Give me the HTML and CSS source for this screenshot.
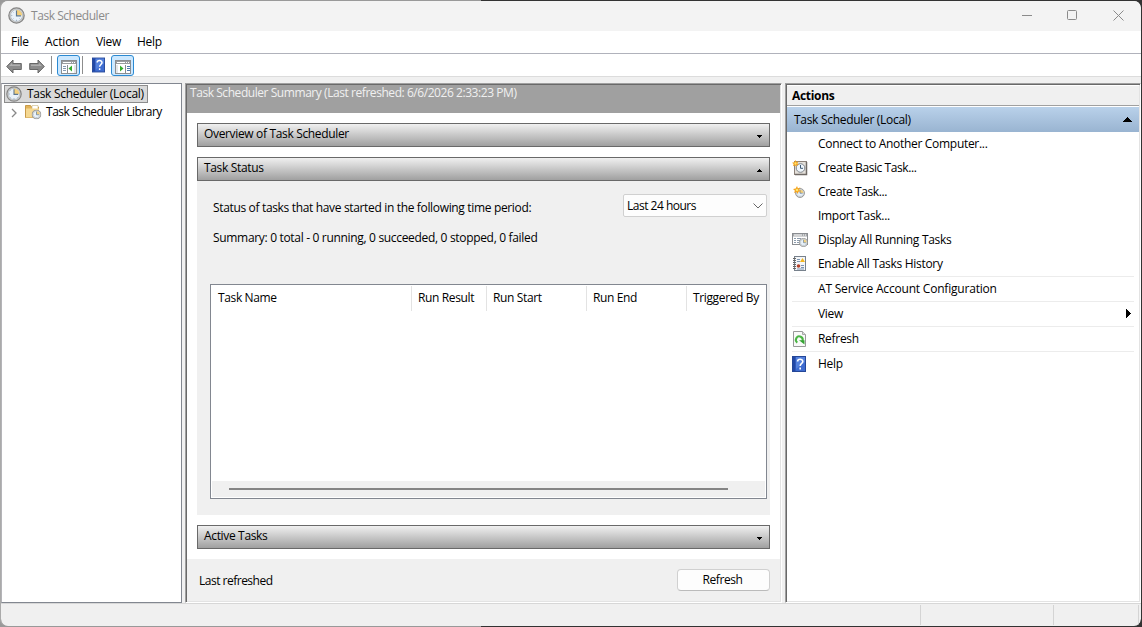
FILE: index.html
```html
<!DOCTYPE html>
<html lang="en">
<head>
<meta charset="utf-8">
<title>Task Scheduler</title>
<link rel="stylesheet" href="styles.css">
</head>
<body>
<svg class="defs" width="0" height="0">
  <symbol id="clock" viewBox="0 0 16 16">
    <circle cx="8" cy="8" r="7.2" fill="#d0d0ce" stroke="#858585" stroke-width="1.200"/>
    <circle cx="8" cy="8" r="5.6" fill="#e9f2fa" stroke="#a8b0b8" stroke-width=".6"/>
    <path d="M8 8V2.6A5.4 5.4 0 0 1 13.4 8Z" fill="#f3cf7b"/>
    <path d="M8 3.2V8.4H12.2" fill="none" stroke="#5d7891" stroke-width="1.1"/>
    <path d="M3 8h1M8 12v1.2M4.5 4.5l.6.6M4.5 11.5l.6-.6M11.5 11.5l-.6-.6" stroke="#8c9eb0" stroke-width=".7"/>
  </symbol>
  <symbol id="help" viewBox="0 0 14 16">
    <rect x=".5" y=".5" width="13" height="15" fill="#3e6cd0" stroke="#244798"/>
    <path d="M1 1h2.5v14H1z" fill="#2348a5"/>
    <path d="M4 1h9v5L4 13z" fill="#6490e5" opacity=".6"/>
    <path d="M5.6 5.4C5.6 2.6 10.8 2.5 10.8 5.4C10.8 7.5 8.2 7.4 8.2 10M8.2 11.6v1.8" fill="none" stroke="#fff" stroke-width="1.6"/>
  </symbol>
  <symbol id="star" viewBox="0 0 8 8">
    <path d="M4 0l1 2.4L7.4 1.300 6 4l2 1.300-2.600.4L5 8 3.400 6 1 7l.9-2.300L0 3l2.700-.5z" fill="#f5a21b"/>
    <circle cx="4" cy="4" r="1.300" fill="#ffe36b"/>
  </symbol>
</svg>
<div class="window">
  <header class="titlebar">
    <svg class="app-icon" width="17" height="17"><use href="#clock"/></svg>
    <span class="title">Task Scheduler</span>
    <svg class="win-buttons" width="104" height="12" fill="none" stroke="#8b8b8b">
      <path d="M0 6.500h10"/><rect x="45.500" y="1.500" width="9" height="9" rx="1"/><path d="M91.500 1.500l10 10M101.500 1.500l-10 10"/>
    </svg>
  </header>
  <nav class="menubar"><span class="m-file">File</span><span class="m-action">Action</span><span class="m-view">View</span><span>Help</span></nav>
  <div class="toolbar">
    <svg class="arrow" width="16" height="15"><path d="M.7 7.500L7 1v3.500h8.300v6H7V14z" fill="#8c8c8c" stroke="#686868"/><path d="M3 7l3-3v1.500h8v1.500z" fill="#b0b0b0"/></svg>
    <svg class="arrow second" width="16" height="15"><path d="M15.300 7.500L9 1v3.500H.7v6H9V14z" fill="#8c8c8c" stroke="#686868"/><path d="M13 7l-3-3v1.500H2v1.500z" fill="#b0b0b0"/></svg>
    <i class="tool-sep"></i>
    <span class="tool-button"><svg width="16" height="14"><rect x=".5" y=".5" width="15" height="13" fill="#fff" stroke="#8a8d91"/><path d="M1 1h14v3H1z" fill="#9a9da0"/><path d="M2 2.500h8M11 2.500h1M13 2.500h1" stroke="#fff"/><path d="M6.500 5v8" stroke="#8a8d91"/><path d="M2 6.500h3M2 8.500h3M2 10.500h3" stroke="#8499b2"/><path d="M13 5h2v8h-2z" fill="#e4e6e8"/><path d="M11 5.500v6L7.500 8.500z" fill="#35ad2c"/></svg></span>
    <i class="tool-sep near"></i>
    <svg class="tool-help" width="13" height="16"><use href="#help"/></svg>
    <span class="tool-button"><svg width="16" height="14"><rect x=".5" y=".5" width="15" height="13" fill="#fff" stroke="#8a8d91"/><path d="M1 1h14v3H1z" fill="#9a9da0"/><path d="M2 2.500h8M11 2.500h1M13 2.500h1" stroke="#fff"/><path d="M10.500 5v8" stroke="#8a8d91"/><path d="M12 6.500h3M12 8.500h3M12 10.500h3" stroke="#4b78ad"/><path d="M1 5h2v8H1z" fill="#e4e6e8"/><path d="M5 5.500v6l3.500-3z" fill="#35ad2c"/></svg></span>
  </div>
  <main class="workspace">
    <aside class="tree">
      <div class="tree-root"><svg width="16" height="16"><use href="#clock"/></svg><span>Task Scheduler (Local)</span></div>
      <div class="tree-child">
        <svg class="chevron" width="6" height="10" fill="none" stroke="#888" stroke-width="1.300"><path d="M1 1l4 4-4 4"/></svg>
        <svg width="17" height="16"><path d="M.5 1.500h5l1 1.500h7v10.500H.5z" fill="#e2b45b" stroke="#c89a49"/><path d="M7 1.500h6v4H7z" fill="#fff" stroke="#c9b57d" stroke-width=".6"/><path d="M1 4.500h13v9H1z" fill="#f5d892"/><svg x="6.500" y="5.500" width="10" height="10"><use href="#clock"/></svg></svg>
        <span>Task Scheduler Library</span>
      </div>
    </aside>
    <section class="summary">
      <h1 class="summary-head">Task Scheduler Summary (Last refreshed: 6/6/2026 2:33:23 PM)</h1>
      <div class="sections">
        <div class="bar"><span>Overview of Task Scheduler</span><svg width="5" height="3"><path d="M0 0h5v1H4v1H3v1H2V2H1V1H0z"/></svg></div>
        <div class="bar gap"><span>Task Status</span><svg width="5" height="3"><path d="M0 3h5V2H4V1H3V0H2v1H1v1H0z"/></svg></div>
        <div class="status">
          <div class="period"><span class="period-label">Status of tasks that have started in the following time period:</span>
            <div class="select"><span>Last 24 hours</span><svg width="10" height="6" fill="none" stroke="#666"><path d="M.5.5L5 5 9.500.5"/></svg></div></div>
          <p class="totals">Summary: 0 total - 0 running, 0 succeeded, 0 stopped, 0 failed</p>
          <div class="table">
            <div class="thead"><span>Task Name</span><span>Run Result</span><span>Run Start</span><span>Run End</span><span>Triggered By</span></div>
            <div class="scroll"><i class="thumb"></i></div>
          </div>
        </div>
        <div class="bar gap"><span>Active Tasks</span><svg width="5" height="3"><path d="M0 0h5v1H4v1H3v1H2V2H1V1H0z"/></svg></div>
      </div>
      <footer class="summary-foot"><span>Last refreshed</span><button class="refresh">Refresh</button></footer>
    </section>
    <aside class="actions">
      <h2 class="actions-head">Actions</h2>
      <div class="actions-group"><span>Task Scheduler (Local)</span><svg width="9" height="5"><path d="M0 5h9V4H8V3H7V2H6V1H5V0H4v1H3v1H2v1H1v1H0z"/></svg></div>
      <ul class="action-list">
        <li><span>Connect to Another Computer...</span></li>
        <li><svg width="16" height="16"><rect x="2.500" y="1.500" width="12" height="13" fill="#e4e0da" stroke="#8c8179"/><path d="M3 14.500h11.500V2" fill="none" stroke="#6f6965" stroke-width="1.500"/><circle cx="8.500" cy="8" r="4.300" fill="#eef5fb" stroke="#80858c"/><path d="M8.500 5v3.300H11" fill="none" stroke="#3f5975"/><use href="#star" width="7" height="7"/></svg><span class="tight">Create Basic Task...</span></li>
        <li><svg width="16" height="16"><svg x="3" y="4" width="10" height="10"><use href="#clock"/></svg><use href="#star" x="1" y="2" width="8" height="8"/></svg><span class="tight">Create Task...</span></li>
        <li><span>Import Task...</span></li>
        <li><svg width="16" height="16"><rect x=".5" y="1.500" width="15" height="11" fill="#fff" stroke="#8a8d91"/><path d="M1 2h14v2.500H1z" fill="#a5a8ab"/><path d="M2 3h8M11 3h1M13 3h1" stroke="#fff"/><path d="M2 6.500h2M5 6.500h4M2 8.500h2M5 8.500h3M2 10.500h2M5 10.500h2" stroke="#8c9cad"/><svg x="7" y="6" width="9" height="9"><use href="#clock"/></svg></svg><span>Display All Running Tasks</span></li>
        <li><svg width="16" height="16"><rect x="2.500" y=".5" width="11" height="14" fill="#f4f6f8" stroke="#77818c"/><path d="M1 2.500h3M1 4.500h3M1 6.500h3M1 8.500h3M1 10.500h3M1 12.500h3" stroke="#666"/><path d="M5 3.500h3M5 5.500h3M9 9.500h3M9 11.500h3M5 13h7" stroke="#7d94b2"/><path d="M10.500 2L13 6H8z" fill="#f2b51e"/><circle cx="6.500" cy="10" r="1.800" fill="#b5432c"/></svg><span>Enable All Tasks History</span></li>
        <li class="split"><span class="loose">AT Service Account Configuration</span></li>
        <li class="split"><span>View</span><svg class="submenu" width="5" height="9"><path d="M0 0h1v1h1v1h1v1h1v1h1v1H4v1H3v1H2v1H1v1H0z"/></svg></li>
        <li class="split"><svg width="16" height="16"><path d="M1.500.5h9l3 3v12h-12z" fill="#fafafa" stroke="#999"/><path d="M10.500.5v3h3" fill="#ddd" stroke="#aaa"/><path d="M5.300 11.600A3.400 3.400 0 1 1 10.500 10" fill="none" stroke="#4ab543" stroke-width="2"/><path d="M7 9.300h5.500v4.200z" fill="#35a332"/></svg><span>Refresh</span></li>
        <li class="split"><svg width="16" height="16"><use href="#help" x="0" width="14" height="16"/></svg><span>Help</span></li>
      </ul>
    </aside>
  </main>
  <footer class="statusbar"><i class="cell one"></i><i class="cell two"></i><i class="cell three"></i></footer>
</div>
</body>
</html>
```
FILE: styles.css
```css
* { box-sizing: border-box; }
body { margin: 0; background: linear-gradient(90deg, #999 481px, #333 481px); overflow: hidden; font: 12px/16px "Open Sans", "Noto Sans", sans-serif; letter-spacing: -.3px; color: #000; }
svg { display: block; flex: none; }
span { white-space: nowrap; }
.defs { position: absolute; }
.window { width: 1142px; height: 627px; display: flex; flex-direction: column; border: 1px solid; border-color: transparent #333 transparent #aaa; border-radius: 8px; background: #f0f0f0; background-clip: padding-box; overflow: hidden; }
.titlebar { height: 30px; flex: none; display: flex; align-items: center; background: #f3f3f3; color: #8b8b8b; padding: 0 15px 2px 7px; }
.title { margin-left: 6px; letter-spacing: -.45px; padding-top: 2px; }
.win-buttons { margin-left: auto; }
.menubar { height: 23px; flex: none; display: flex; background: #fff; border-bottom: 1px solid #b0b2bb; padding: 3px 0 0 10px; }
.m-file { width: 34px; }
.m-action { width: 51px; letter-spacing: -.1px; }
.m-view { width: 41px; }
.toolbar { height: 23px; flex: none; display: flex; align-items: center; background: #fff; border-bottom: 1px solid #dcdcdc; padding-left: 5px; }
.arrow { margin-top: 2px; }
.second { margin-left: 7px; }
.tool-sep { width: 1px; height: 18px; background: #8d8d8d; margin: 0 5px 0 6px; }
.tool-sep.near { margin: 0 9px 0 2px; }
.tool-help { margin-right: 6px; }
.tool-button { width: 23px; height: 21px; display: flex; align-items: center; justify-content: center; padding-top: 4px; border: 1px solid #2c8ad2; border-radius: 3px; background: #cce8ff; }
.workspace { height: 526px; flex: none; display: flex; padding-top: 6px; }
.tree { width: 181px; height: 520px; margin-right: 3px; background: #fff; border: 1px solid #828790; border-left-color: #b4b4b8; padding: 1px 0 0 2px; }
.tree-root { display: flex; align-items: center; width: 144px; height: 18px; background: #d9d9d9; border: 1px solid #8c8c8c; padding-left: 1px; gap: 5px; }
.tree-child { display: flex; align-items: center; height: 18px; padding-left: 7px; }
.tree-child .chevron { margin: 2px 8px 0 0; }
.tree-child span { margin-left: 4px; letter-spacing: -.48px; }
.summary, .actions { height: 520px; border-style: solid; border-width: 1px; border-color: #a0a0a0 #fff #fff #a0a0a0; box-shadow: inset 1px 1px #696969, inset -1px -1px #e3e3e3; }
.summary { width: 597px; padding: 1px; display: flex; flex-direction: column; }
.summary-head { margin: 0; height: 28px; flex: none; background: #a0a0a0; color: #f0f0f0; font-size: 12px; font-weight: 400; letter-spacing: -.44px; padding-left: 3px; }
.sections { height: 446px; flex: none; background: #fff; padding: 10px 10px 0; }
.bar { height: 24px; display: flex; justify-content: space-between; align-items: center; border: 1px solid #696969; background: linear-gradient(#f0f0f0, #a0a0a0); padding: 0 7px 2px 6px; letter-spacing: -.34px; }
.bar svg { margin-top: 4px; }
.bar.gap { margin-top: 10px; }
.status { height: 334px; background: #f0f0f0; padding: 13px 3px 0 13px; }
.period { display: flex; justify-content: space-between; align-items: center; height: 23px; padding-left: 3px; }
.period-label { padding-top: 4px; letter-spacing: -.34px; }
.select { display: flex; align-items: center; justify-content: space-between; width: 144px; height: 23px; background: #fdfdfd; border: 1px solid #d0d0d0; border-radius: 2px; padding: 1px 3px 0 3px; letter-spacing: -.5px; }
.totals { margin: 13px 0 38px 3px; letter-spacing: -.32px; }
.table { height: 215px; display: flex; flex-direction: column; justify-content: space-between; background: #fff; border: 1px solid #828790; padding: 1px; }
.thead { display: grid; grid-template-columns: 200px 75px 100px 100px 1fr; height: 25px; letter-spacing: -.36px; }
.thead span { padding: 4px 0 0 6px; border-right: 1px solid #e3e3e3; }
.thead span:last-child { border: 0; }
.scroll { height: 16px; background: #f0f0f0; padding: 7px 0 0 17px; }
.thumb { display: block; width: 499px; height: 2px; background: #858585; }
.summary-foot { flex: 1; padding: 10px 10px 0 12px; display: flex; justify-content: space-between; }
.summary-foot span { margin-top: 4px; letter-spacing: -.5px; }
.refresh { width: 93px; height: 22px; padding: 0 2px 0 0; font: inherit; letter-spacing: -.4px; background: #fdfdfd; border: 1px solid #d0d0d0; border-bottom-color: #bbb; border-radius: 4px; color: #000; }
.actions { width: 356px; margin-left: 3px; padding: 2px 1px 1px; background: #fff; }
.actions-head { margin: 0; height: 20px; background: #f0f0f0; border-bottom: 1px solid #a0a0a0; font-size: 12px; line-height: 20px; padding-left: 5px; }
.actions-group { height: 25px; margin-top: 1px; display: flex; align-items: center; justify-content: space-between; background: linear-gradient(#b9d1ea, #99b4d1); padding: 0 7px; }
.action-list { list-style: none; margin: 0; padding: 0 5px; }
.action-list li { height: 24px; display: flex; align-items: center; gap: 10px; }
.action-list li > span:first-child { margin-left: 26px; }
.action-list .split { height: 25px; border-top: 1px solid #ececec; }
.tight { letter-spacing: -.42px; }
.loose { letter-spacing: -.2px; }
.submenu { margin: 0 3px 1px auto; }
.statusbar { flex: 1; border-top: 1px solid #d7d7d7; display: flex; padding-top: 1px; }
.cell { border-right: 1px solid #d4d4d4; height: 20px; flex: none; }
.one { width: 920px; }
.two { width: 133px; }
.three { width: 85px; }
```
